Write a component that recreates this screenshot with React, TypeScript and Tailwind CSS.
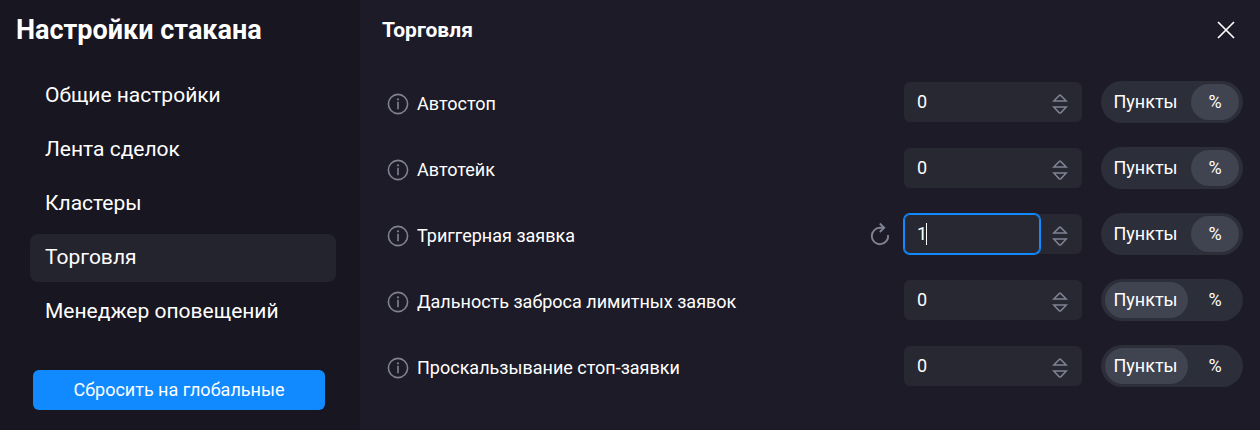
import React, { useState } from 'react';

type Unit = 'points' | 'percent';

interface Setting {
  id: string;
  label: string;
  value: string;
  unit: Unit;
  resettable?: boolean;
}

const sections = [
  'Общие настройки',
  'Лента сделок',
  'Кластеры',
  'Торговля',
  'Менеджер оповещений',
];

const initialSettings: Setting[] = [
  { id: 'autostop', label: 'Автостоп', value: '0', unit: 'percent' },
  { id: 'autotake', label: 'Автотейк', value: '0', unit: 'percent' },
  { id: 'trigger', label: 'Триггерная заявка', value: '1', unit: 'percent', resettable: true },
  { id: 'limit-range', label: 'Дальность заброса лимитных заявок', value: '0', unit: 'points' },
  { id: 'stop-slippage', label: 'Проскальзывание стоп-заявки', value: '0', unit: 'points' },
];

const InfoIcon: React.FC = () => (
  <svg className="h-[22px] w-[22px] shrink-0 text-[#7f8292]" viewBox="0 0 22 22" fill="none" stroke="currentColor" aria-hidden="true">
    <circle cx="11" cy="11" r="9.6" strokeWidth="1.6" />
    <path d="M11 8.8v7.4" strokeWidth="1.6" />
    <circle cx="11" cy="6.3" r="1.1" fill="currentColor" stroke="none" />
  </svg>
);

const ResetIcon: React.FC = () => (
  <svg className="h-6 w-5" viewBox="0 0 20 24" fill="none" stroke="currentColor" strokeWidth="1.9" aria-hidden="true">
    <path d="M13.8 5.8H10A8.2 8.2 0 1 0 18.1 13" />
    <path d="M9.8 1.5l4.4 4.3-4.4 4.2" />
  </svg>
);

const SpinIcon: React.FC<{ down?: boolean }> = ({ down }) => (
  <svg className="h-2 w-4" viewBox="0 0 16 8" fill="none" stroke="currentColor" strokeWidth="1.5" aria-hidden="true">
    <path d={down ? 'M1.8 1h12.4L9 6.6q-1 .8-2 0z' : 'M1.8 7h12.4L8.6 1.4q-.6-.5-1.2 0z'} />
  </svg>
);

const CloseIcon: React.FC = () => (
  <svg className="h-[18px] w-[18px]" viewBox="0 0 18 18" fill="none" stroke="currentColor" strokeWidth="1.7" aria-hidden="true">
    <path d="M1 1l16 16M17 1L1 17" />
  </svg>
);

interface NumberFieldProps {
  id: string;
  value: string;
  focused?: boolean;
  onChange: (value: string) => void;
}

const NumberField: React.FC<NumberFieldProps> = ({ id, value, focused, onChange }) => {
  const step = (delta: number) => onChange(String(Math.max(0, Number(value) + delta)));

  return (
    <div className="relative flex h-10 w-[178px] rounded-md bg-[#282833] text-lg">
      <input
        id={id}
        type="text"
        inputMode="numeric"
        autoFocus={focused}
        value={value}
        onFocus={(e) => e.target.setSelectionRange(value.length, value.length)}
        onChange={(e) => onChange(e.target.value)}
        className="peer h-10 w-[136px] rounded-md bg-transparent pb-[2px] pl-[13px] text-white caret-transparent outline-none focus:ring-1 focus:inset-ring-1 focus:ring-[#118aff] focus:inset-ring-[#118aff]"
      />
      {/* steady caret, sits after the last digit */}
      <span
        className="pointer-events-none absolute top-[9px] hidden h-[22px] w-px bg-white peer-focus:block"
        style={{ left: `calc(12px + ${value.length}ch)` }}
      />
      <div className="flex flex-1 flex-col items-center justify-center gap-1 pt-1 pr-[2px] text-[#7f8292]">
        <button type="button" aria-label="Увеличить" onClick={() => step(1)}>
          <SpinIcon />
        </button>
        <button type="button" aria-label="Уменьшить" onClick={() => step(-1)}>
          <SpinIcon down />
        </button>
      </div>
    </div>
  );
};

interface UnitSwitchProps {
  unit: Unit;
  onChange: (unit: Unit) => void;
}

const UnitSwitch: React.FC<UnitSwitchProps> = ({ unit, onChange }) => (
  <div className="flex h-[42px] w-[142px] items-center justify-between rounded-full bg-[#2c2e3a] px-1">
    <button
      type="button"
      aria-pressed={unit === 'points'}
      onClick={() => onChange('points')}
      className={`h-9 w-[83px] rounded-full pr-[2px] text-lg ${unit === 'points' ? 'bg-[#404350]' : ''}`}
    >
      Пункты
    </button>
    <button
      type="button"
      aria-pressed={unit === 'percent'}
      onClick={() => onChange('percent')}
      className={`h-9 w-12 rounded-full text-lg ${unit === 'percent' ? 'bg-[#404350]' : ''}`}
    >
      %
    </button>
  </div>
);

const App: React.FC = () => {
  const [active, setActive] = useState('Торговля');
  const [settings, setSettings] = useState(initialSettings);

  const update = (id: string, patch: Partial<Setting>) => {
    setSettings((prev) => prev.map((s) => (s.id === id ? { ...s, ...patch } : s)));
  };

  return (
    <div className="flex min-h-screen bg-[#1d1b27] font-[Roboto,sans-serif] text-white">
      <aside className="flex w-[360px] shrink-0 flex-col bg-[#181620] pb-5">
        <h1 className="px-4 pt-3 text-[27px] leading-9 font-bold">Настройки стакана</h1>
        <nav className="mt-6 flex flex-col gap-[6px] pr-6 pl-[30px]">
          {sections.map((name) => (
            <button
              key={name}
              type="button"
              onClick={() => setActive(name)}
              className={`h-12 rounded-lg px-[15px] text-left text-[21px] ${active === name ? 'bg-[#24242e]' : ''}`}
            >
              {name}
            </button>
          ))}
        </nav>
        <button
          type="button"
          className="mt-[34px] mr-[35px] ml-[33px] h-10 rounded-md bg-[#118aff] text-lg"
        >
          Сбросить на глобальные
        </button>
      </aside>

      <main className="min-w-0 flex-1 pr-[17px] pl-[22px]">
        <header className="flex h-[60px] items-center justify-between pr-2">
          <h2 className="pt-[2px] text-[21px] font-bold">{active}</h2>
          <button type="button" aria-label="Закрыть">
            <CloseIcon />
          </button>
        </header>
        <div className="mt-[21px] flex flex-col gap-6">
          {settings.map((s) => (
            <div key={s.id} className="flex h-[42px] items-center">
              <div className="flex flex-1 items-center gap-2 pt-1 pl-[5px]">
                <InfoIcon />
                <label htmlFor={s.id} className="text-lg">
                  {s.label}
                </label>
              </div>
              {s.resettable && (
                <button type="button" aria-label="Сбросить" className="mr-[14px] text-[#7f8292]" onClick={() => update(s.id, { value: '0' })}>
                  <ResetIcon />
                </button>
              )}
              <NumberField
                id={s.id}
                value={s.value}
                focused={s.resettable}
                onChange={(value) => update(s.id, { value })}
              />
              <div className="ml-[19px]">
                <UnitSwitch unit={s.unit} onChange={(unit) => update(s.id, { unit })} />
              </div>
            </div>
          ))}
        </div>
      </main>
    </div>
  );
};

export default App;
